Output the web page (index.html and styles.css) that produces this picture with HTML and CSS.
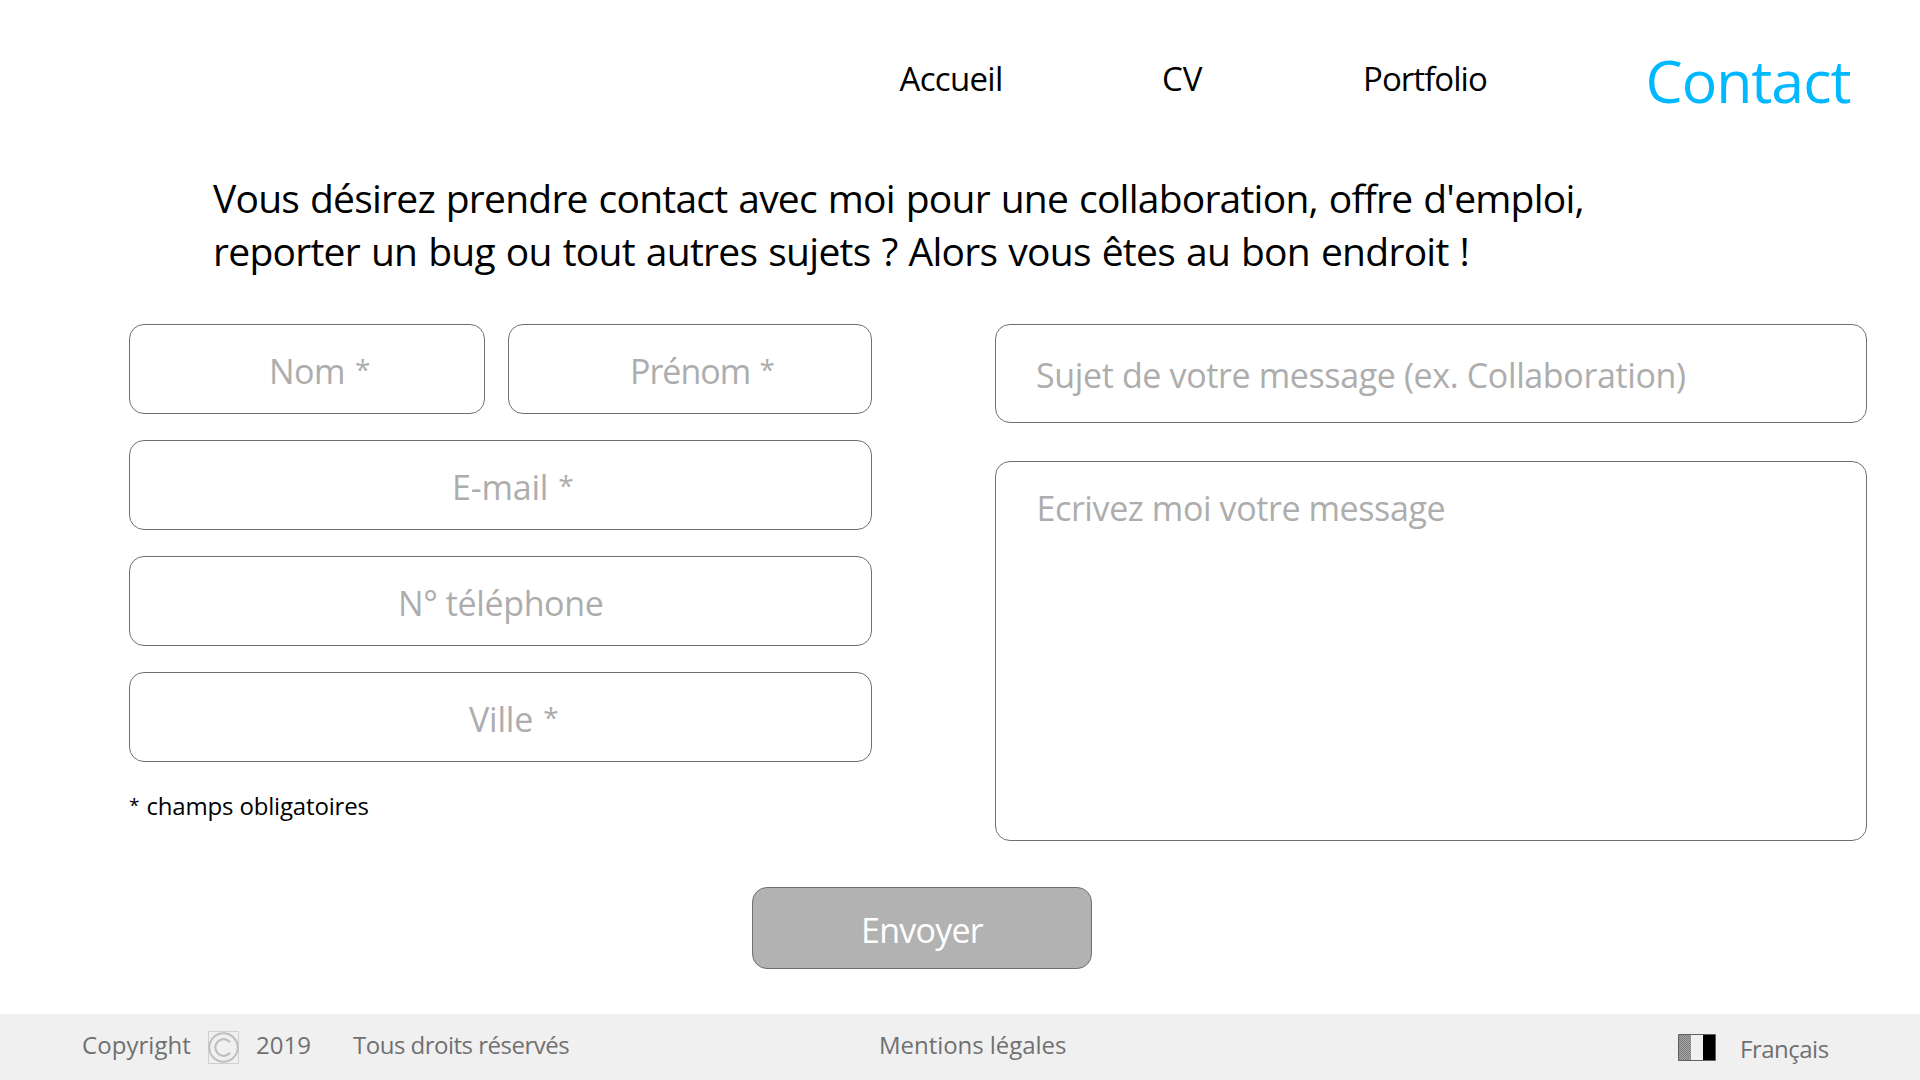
FILE: index.html
```html
<!DOCTYPE html>
<html lang="fr">
<head>
  <meta charset="utf-8">
  <title>Contact</title>
  <link rel="stylesheet" href="styles.css">
</head>
<body>
  <nav class="nav">
    <a class="nav-link nav-home">Accueil</a>
    <a class="nav-link">CV</a>
    <a class="nav-link nav-portfolio">Portfolio</a>
    <a class="nav-link nav-active">Contact</a>
  </nav>

  <main class="main">
    <h1 class="intro">
      <span class="intro-first">Vous désirez prendre contact avec moi pour une collaboration, offre d'emploi,</span>
      <span class="intro-second">reporter un bug ou tout autres sujets ? Alors vous êtes au bon endroit !</span>
    </h1>

    <form class="form">
      <div class="identity">
        <div class="names">
          <div class="field lastname">Nom <span class="star">*</span></div>
          <div class="field firstname">Prénom <span class="star">*</span></div>
        </div>
        <div class="field email">E-mail <span class="star">*</span></div>
        <div class="field phone">N° téléphone</div>
        <div class="field city">Ville <span class="star">*</span></div>
        <p class="hint"><span class="hint-star">*</span> champs obligatoires</p>
      </div>
      <div class="message">
        <div class="field subject">Sujet de votre message (ex. Collaboration)</div>
        <div class="field body-text">Ecrivez moi votre message</div>
      </div>
    </form>
    <div class="send">Envoyer</div>
  </main>

  <footer class="footer">
    <span class="copyright">Copyright</span>
    <svg class="copy-icon" width="31" height="33" viewBox="0 0 31 33" fill="none">
      <rect x=".5" y=".5" width="30" height="32" stroke="#d0d0d0"/>
      <circle cx="15.5" cy="16.5" r="14.2" stroke="#bfbfbf" stroke-width="2"/>
      <path d="M22 11.2A8.3 8.3 0 1 0 22 21.8" stroke="#bfbfbf" stroke-width="2.2"/>
    </svg>
    <span class="year">2019</span>
    <span class="rights">Tous droits réservés</span>
    <span class="legal">Mentions légales</span>
    <svg class="flag" width="38" height="27" viewBox="0 0 38 27">
      <defs>
        <pattern id="dither" width="2" height="2" patternUnits="userSpaceOnUse">
          <rect width="2" height="2" fill="#a6a6a6"/>
          <rect width="1" height="1" fill="#7c7c7c"/>
          <rect x="1" y="1" width="1" height="1" fill="#7c7c7c"/>
        </pattern>
      </defs>
      <rect width="38" height="27" rx="1" fill="#5f5f5f"/>
      <rect x="1" y="1" width="12" height="25" fill="url(#dither)"/>
      <rect x="13" y="1" width="12" height="25" fill="#f0f0f0"/>
      <rect x="25" y="1" width="12" height="25" fill="#000"/>
    </svg>
    <span class="language">Français</span>
  </footer>
</body>
</html>
```
FILE: styles.css
```css
* { box-sizing: border-box; }

body {
  margin: 0;
  height: 1080px;
  display: flex;
  flex-direction: column;
  overflow: hidden;
  background: #fff;
  color: #000;
  font-family: "Open Sans", "Noto Sans", sans-serif;
  white-space: nowrap;
}

.nav {
  display: grid;
  grid-template-columns: 262.5px 201px 282.5px auto;
  height: 171px;
  padding: 40px 0 0 899.5px;
  align-items: start;
}
.nav-link { margin-top: 9px; font-size: 33px; line-height: 60px; }
.nav-home { letter-spacing: -.7px; }
.nav-portfolio { letter-spacing: -.95px; }
.nav-active {
  margin-top: 0;
  color: #00b8ff;
  font-size: 59px;
  line-height: 80px;
  letter-spacing: -1px;
}

.main { height: 843px; }

.intro {
  margin: 0 0 47px 213px;
  font-size: 39px;
  font-weight: 400;
  line-height: 53px;
}
.intro-first, .intro-second { display: block; word-spacing: 1.5px; }
.intro-first { letter-spacing: -.77px; }
.intro-second { letter-spacing: -.73px; }

.form {
  display: grid;
  grid-template-columns: 743px 872px;
  column-gap: 123px;
  height: 563px;
  padding-left: 129px;
}
.identity { display: flex; flex-direction: column; gap: 26px; }
.names { display: grid; grid-template-columns: 356px 364px; column-gap: 23px; }

.field {
  height: 90px;
  border: 1px solid #707070;
  border-radius: 15px;
  color: #adadad;
  font-size: 34px;
  line-height: 93px;
}
.star { margin-left: 1.5px; font-size: 28px; line-height: 0; vertical-align: 4px; }
.lastname { padding-left: 139px; letter-spacing: -.5px; }
.firstname { padding-left: 121px; letter-spacing: -1px; }
.email { padding-left: 322px; letter-spacing: -.2px; }
.phone { padding-left: 268px; letter-spacing: -.38px; }
.city { padding-left: 339px; letter-spacing: -.2px; }
.hint { margin: -3px 0 0; font-size: 24px; line-height: 42px; letter-spacing: -.16px; }
.hint-star { margin-right: 1px; font-size: 19px; line-height: 0; vertical-align: 3px; }

.message { display: flex; flex-direction: column; gap: 38px; }
.subject { height: 99px; padding-left: 40px; line-height: 100px; letter-spacing: -.37px; }
.body-text { height: 380px; padding-left: 40.5px; line-height: 92px; letter-spacing: -.4px; }

.send {
  width: 340px;
  height: 82px;
  margin-left: 752px;
  padding-left: 108px;
  border: 1px solid #707070;
  border-radius: 15px;
  background: #b2b2b2;
  color: #fff;
  font-size: 34px;
  line-height: 84px;
  letter-spacing: -.74px;
}

.footer {
  display: grid;
  grid-template-columns: 126px 48px 97px 526px 799px 62px auto;
  height: 66px;
  padding-left: 82px;
  align-items: start;
  background: #f0f0f0;
  color: #707070;
  font-size: 24px;
  line-height: 62px;
}
.copyright { letter-spacing: .05px; }
.copy-icon { margin-top: 17px; }
.rights { letter-spacing: -.5px; }
.legal { letter-spacing: -.05px; }
.flag { margin-top: 20px; }
.language { padding-top: 4px; letter-spacing: -.5px; }
```
